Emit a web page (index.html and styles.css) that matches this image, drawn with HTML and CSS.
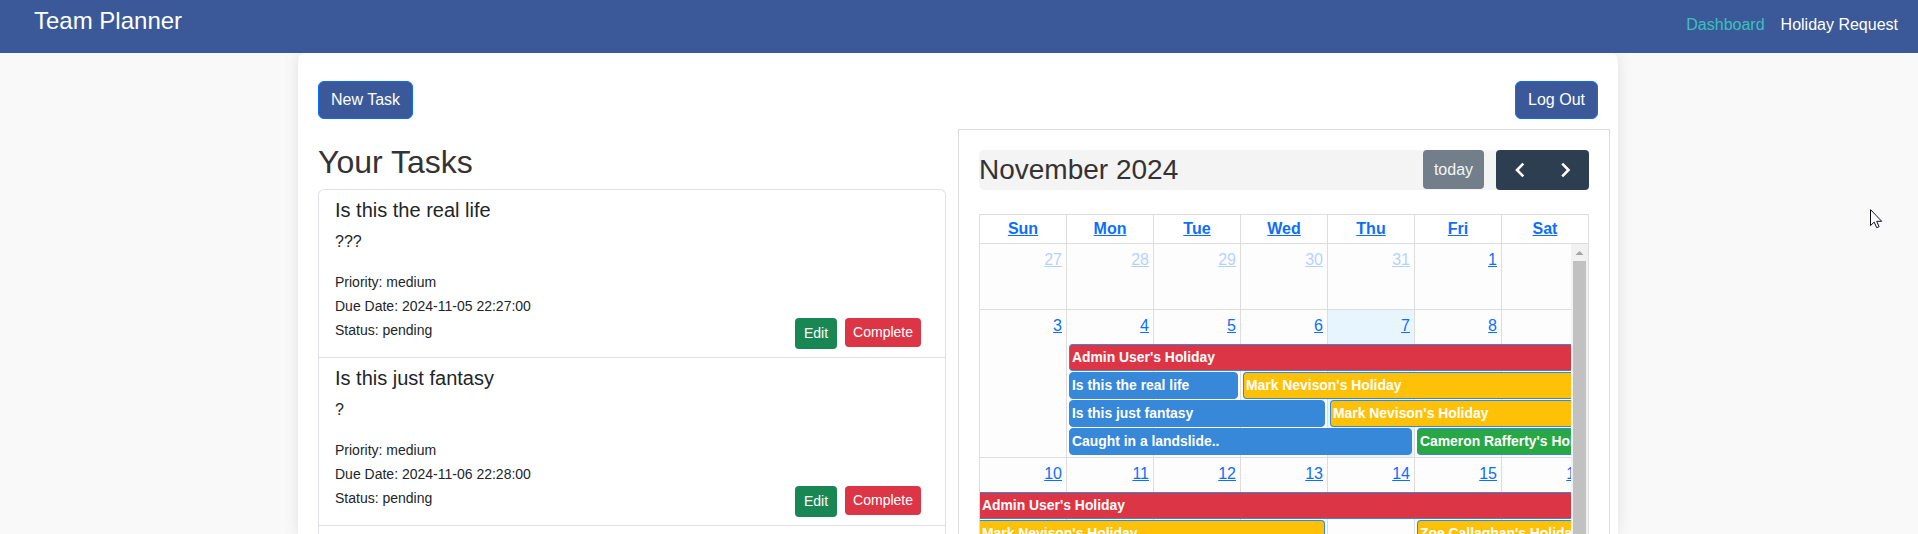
FILE: index.html
```html
<!DOCTYPE html>
<html lang="en">
<head>
<meta charset="utf-8">
<title>Team Planner</title>
<link rel="stylesheet" href="styles.css">
</head>
<body>
<header class="navbar">
  <div class="brand">Team Planner</div>
  <nav class="nav-links">
    <a class="active" href="#">Dashboard</a>
    <a href="#">Holiday Request</a>
  </nav>
</header>
<main class="container">
  <div class="actions">
    <button class="btn">New Task</button>
    <button class="btn">Log Out</button>
  </div>
  <div class="columns">
    <section class="tasks">
      <h2>Your Tasks</h2>
      <ul class="task-list">
        <li class="task">
          <div class="task-info">
            <h5>Is this the real life</h5>
            <p>???</p>
            <small>Priority: medium</small>
            <small>Due Date: 2024-11-05 22:27:00</small>
            <small>Status: pending</small>
          </div>
          <div class="task-actions"><a class="edit">Edit</a><button class="complete">Complete</button></div>
        </li>
        <li class="task">
          <div class="task-info">
            <h5>Is this just fantasy</h5>
            <p>?</p>
            <small>Priority: medium</small>
            <small>Due Date: 2024-11-06 22:28:00</small>
            <small>Status: pending</small>
          </div>
          <div class="task-actions"><a class="edit">Edit</a><button class="complete">Complete</button></div>
        </li>
        <li class="task task-next"></li>
      </ul>
    </section>
    <section class="calendar">
      <div class="toolbar">
        <h2>November 2024</h2>
        <div class="toolbar-buttons">
          <button class="today">today</button>
          <div class="pager">
            <button aria-label="Previous month"><svg width="24" height="24" viewBox="0 0 24 24"><path d="M16.3 5.7 10 12l6.3 6.3"/></svg></button>
            <button aria-label="Next month"><svg width="24" height="24" viewBox="0 0 24 24"><path d="m8.2 5.7 6.3 6.3-6.3 6.3"/></svg></button>
          </div>
        </div>
      </div>
      <div class="month">
        <div class="weekdays"><a>Sun</a><a>Mon</a><a>Tue</a><a>Wed</a><a>Thu</a><a>Fri</a><a>Sat</a></div>
        <div class="month-body">
          <div class="weeks">
            <div class="week week-short">
              <div class="day c1 other"><a>27</a></div>
              <div class="day c2 other"><a>28</a></div>
              <div class="day c3 other"><a>29</a></div>
              <div class="day c4 other"><a>30</a></div>
              <div class="day c5 other"><a>31</a></div>
              <div class="day c6"><a>1</a></div>
              <div class="day c7"></div>
            </div>
            <div class="week">
              <div class="day c1"><a>3</a></div>
              <div class="day c2"><a>4</a></div>
              <div class="day c3"><a>5</a></div>
              <div class="day c4"><a>6</a></div>
              <div class="day c5 current"><a>7</a></div>
              <div class="day c6"><a>8</a></div>
              <div class="day c7"></div>
              <div class="event red r1 mon-sat open-end">Admin User's Holiday</div>
              <div class="event blue r2 mon-tue">Is this the real life</div>
              <div class="event yellow r2 wed-sat open-end">Mark Nevison's Holiday</div>
              <div class="event blue r3 mon-wed">Is this just fantasy</div>
              <div class="event yellow r3 thu-sat open-end">Mark Nevison's Holiday</div>
              <div class="event blue r4 mon-thu">Caught in a landslide..</div>
              <div class="event green r4 fri-sat open-end">Cameron Rafferty's Holiday</div>
            </div>
            <div class="week">
              <div class="day c1"><a>10</a></div>
              <div class="day c2"><a>11</a></div>
              <div class="day c3"><a>12</a></div>
              <div class="day c4"><a>13</a></div>
              <div class="day c5"><a>14</a></div>
              <div class="day c6"><a>15</a></div>
              <div class="day c7"><a>16</a></div>
              <div class="event red r1 sun-sat open-start open-end">Admin User's Holiday</div>
              <div class="event yellow r2 sun-wed open-start">Mark Nevison's Holiday</div>
              <div class="event yellow r2 fri-sat open-end">Zoe Callaghan's Holiday</div>
            </div>
          </div>
          <div class="scrollbar">
            <svg width="17" height="17" viewBox="0 0 17 17"><path d="M4.5 11h8L8.5 7z" fill="#a3a3a3"/></svg>
            <div class="thumb"></div>
          </div>
        </div>
      </div>
    </section>
  </div>
</main>
<svg class="cursor" width="13" height="20" viewBox="0 0 13 20"><path d="M.5.6v16l3.7-3.5 2.5 5.6 2.4-1-2.4-5.4h5z" fill="#fff" stroke="#10101c" stroke-width="1"/></svg>
</body>
</html>
```

FILE: styles.css
```css
* { box-sizing: border-box; }

body {
  margin: 0;
  height: 534px;
  overflow: hidden;
  background: #f9f9f9;
  color: #212529;
  font: 16px/24px "Liberation Sans", Arial, sans-serif;
}

h2, h5, p, ul { margin: 0; padding: 0; font-weight: 400; }

button { font: inherit; border: 0; margin: 0; }

.navbar {
  position: relative;
  z-index: 1;
  display: flex;
  justify-content: space-between;
  height: 53px;
  padding: 3px 20px 0 34px;
  background: #3b5998;
  color: #fff;
}

.brand { font-size: 24px; line-height: 36px; }

.nav-links { display: flex; gap: 16px; padding-top: 10px; }
.nav-links a { color: #fff; text-decoration: none; }
.nav-links .active { color: #3ac1bb; }

.container {
  width: 1320px;
  height: 481px;
  margin: 0 auto;
  padding: 28px 20px 0;
  position: relative;
  left: -1px;
  background: #fff;
  border-radius: 8px 8px 0 0;
  box-shadow: 0 0 15px rgba(0, 0, 0, .1);
}

.actions { display: flex; justify-content: space-between; height: 48px; }

.btn {
  height: 38px;
  padding: 0 12px;
  background: #3b5998;
  color: #fff;
  border: 1px solid #0d6efd;
  border-radius: 6px;
}

.columns { display: flex; gap: 12px; margin-right: -12px; }

.tasks { width: 628px; padding-top: 14px; }
.tasks h2 { height: 46px; font-size: 32px; line-height: 38px; color: #333; }

.task-list {
  list-style: none;
  border: 1px solid #dee2e6;
  border-bottom: 0;
  border-radius: 6px 6px 0 0;
}

.task {
  display: flex;
  justify-content: space-between;
  height: 168px;
  padding: 8px 24px 0 16px;
  border-bottom: 1px solid #dee2e6;
}

.task-next { height: 8px; padding: 0; border: 0; }

.task h5 { margin-bottom: 8px; font-size: 20px; line-height: 24px; }
.task p { margin-bottom: 16px; }
.task small { display: block; font-size: 14px; line-height: 24px; }

.task-actions { display: flex; align-items: flex-start; gap: 8px; padding-top: 120px; color: #fff; font-size: 14px; }
.edit { height: 31px; padding: 0 9px; line-height: 31px; background: #198754; border-radius: 4px; }
.complete { height: 29px; padding: 0 8px; line-height: 29px; background: #dc3545; color: #fff; border-radius: 4px; }

.calendar {
  width: 652px;
  height: 405px;
  padding: 20px 20px 0;
  border: 1px solid #ddd;
  border-bottom: 0;
}

.toolbar {
  display: flex;
  justify-content: space-between;
  height: 40px;
  margin-bottom: 24px;
  background: #f4f4f4;
  border-radius: 5px;
}

.toolbar h2 { font-size: 28px; line-height: 40px; color: #333; }
.toolbar-buttons { display: flex; align-items: flex-start; gap: 12px; }

.today {
  width: 61px;
  height: 39px;
  padding: 0;
  background: #727e89;
  color: #f4f5f5;
  border-radius: 4px;
}

.pager { display: flex; width: 93px; height: 40px; background: #2c3e50; border-radius: 4px; }
.pager button { flex: 1; display: flex; align-items: center; justify-content: center; padding: 0; background: none; }
.pager path { fill: none; stroke: #fff; stroke-width: 2.6; }

.month { border: solid #ddd; border-width: 1px 0 0 1px; }

.weekdays { display: grid; grid-template-columns: repeat(7, 87px); height: 29px; border-bottom: 1px solid #ddd; }

.weekdays a {
  border-right: 1px solid #ddd;
  line-height: 28px;
  text-align: center;
  font-weight: 700;
  color: #0d6efd;
  text-decoration: underline;
}

.month-body { display: flex; height: 290px; overflow: hidden; border-right: 1px solid #ddd; }
.weeks { width: 591px; overflow: hidden; background: #fdfdfd; }

.week {
  display: grid;
  grid-template-columns: repeat(7, 87px);
  grid-template-rows: 34px 28px 28px 28px 28px;
  width: 609px;
  height: 148px;
}

.week-short { height: 66px; grid-template-rows: 66px; }
.week-short .day { grid-row: 1; }

.day {
  grid-row: 1 / 6;
  padding: 4px 4px 0 0;
  height: 148px;
  text-align: right;
  border: solid #ddd;
  border-width: 0 1px 1px 0;
}

.week-short .day { height: 66px; }
.day a { color: #0d6efd; text-decoration: underline; }
.other a { opacity: .3; }
.current { background: #e7f5ff; }

.c1 { grid-column: 1; }
.c2 { grid-column: 2; }
.c3 { grid-column: 3; }
.c4 { grid-column: 4; }
.c5 { grid-column: 5; }
.c6 { grid-column: 6; }
.c7 { grid-column: 7; }

.event {
  height: 27px;
  margin: 0 3px 0 2px;
  padding: 0 2px;
  border: 1px solid #3788d8;
  border-radius: 4px;
  color: #fff;
  font-size: 13.9px;
  font-weight: 700;
  line-height: 25px;
  white-space: nowrap;
  overflow: hidden;
}

.open-start { margin-left: 0; border-left: 0; border-top-left-radius: 0; border-bottom-left-radius: 0; }
.open-end { margin-right: 0; border-right: 0; border-top-right-radius: 0; border-bottom-right-radius: 0; }

.red { background: #dc3545; }
.blue { background: #3788d8; }
.yellow { background: #ffc107; }
.green { background: #28a745; }

.r1 { grid-row: 2; }
.r2 { grid-row: 3; }
.r3 { grid-row: 4; }
.r4 { grid-row: 5; }

.sun-sat { grid-column: 1 / 8; }
.sun-wed { grid-column: 1 / 5; }
.mon-tue { grid-column: 2 / 4; }
.mon-wed { grid-column: 2 / 5; }
.mon-thu { grid-column: 2 / 6; }
.mon-sat { grid-column: 2 / 8; }
.wed-sat { grid-column: 4 / 8; }
.thu-sat { grid-column: 5 / 8; }
.fri-sat { grid-column: 6 / 8; }

.scrollbar { width: 17px; background: #f1f1f1; }
.scrollbar svg { display: block; }
.thumb { width: 13px; height: 273px; margin: 0 auto; background: #c1c1c1; }

.cursor { position: absolute; left: 1870px; top: 209px; z-index: 2; }
```
